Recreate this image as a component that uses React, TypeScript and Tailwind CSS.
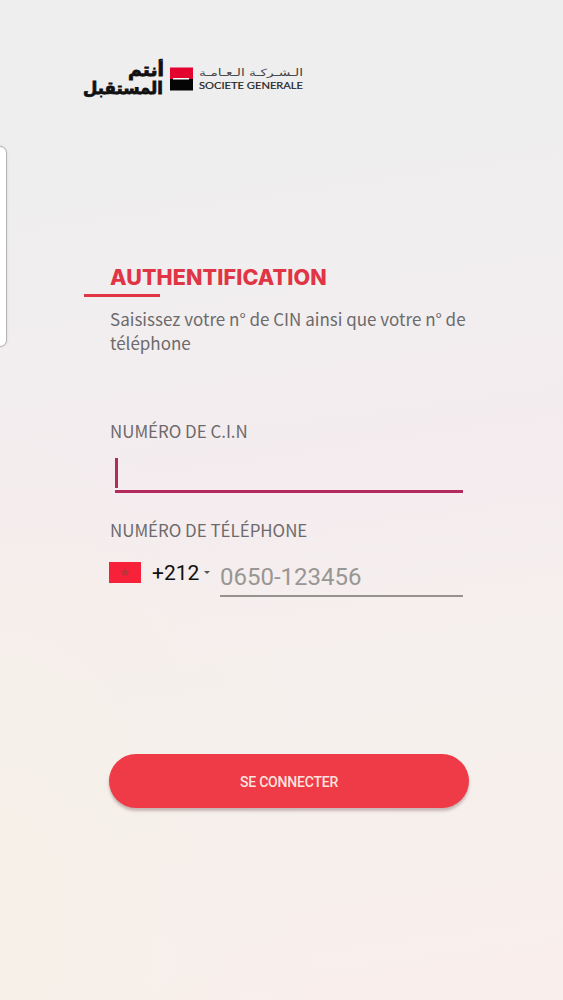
import { useState } from "react";

function BrandLogo() {
  return (
    <svg width="224" height="50" viewBox="0 0 224 50" role="img" aria-label="Société Générale">
      <g fill="#111111" fontWeight="700" fontFamily='"DejaVu Sans", sans-serif' direction="rtl">
        <text x="81" y="22.5" fontSize="17.5" textLength="36" lengthAdjust="spacingAndGlyphs" stroke="#111111" strokeWidth="0.8">
          أنتم
        </text>
        <text x="80" y="41" fontSize="17" textLength="80" lengthAdjust="spacingAndGlyphs" stroke="#111111" strokeWidth="0.8">
          المستقبل
        </text>
      </g>
      <rect x="87" y="14.5" width="23" height="11.5" fill="#e4032e" />
      <rect x="87" y="26" width="23" height="11.5" fill="#050505" />
      <rect x="90" y="25" width="16" height="1.5" fill="#ffffff" />
      <text
        x="220"
        y="23"
        direction="rtl"
        fill="#444444"
        fontSize="10"
        fontFamily='"DejaVu Sans", sans-serif'
        textLength="104"
        lengthAdjust="spacingAndGlyphs"
      >
        الـشـركـة الـعـامـة
      </text>
      <text
        x="116"
        y="35.5"
        fill="#222222"
        stroke="#222222"
        strokeWidth="0.2"
        fontSize="10.4"
        fontFamily='Lato, "Liberation Sans", sans-serif'
        textLength="104"
        lengthAdjust="spacingAndGlyphs"
      >
        SOCIETE GENERALE
      </text>
    </svg>
  );
}

function MoroccoFlag() {
  return (
    <svg width="32" height="21" viewBox="0 0 32 21" aria-hidden="true">
      <rect width="32" height="21" fill="#f8213a" />
      <path d="M16 7 18 13 12.8 9.3H19.2L14 13Z" fill="none" stroke="#b5363a" strokeWidth="1.2" />
    </svg>
  );
}

interface FieldLabelProps {
  htmlFor: string;
  children: string;
}

function FieldLabel({ htmlFor, children }: FieldLabelProps) {
  return (
    <label
      htmlFor={htmlFor}
      className="block h-6 whitespace-nowrap font-['Noto_Sans_CJK_SC',sans-serif] text-[16.9px] leading-6 text-[#6c6a6b]"
    >
      {children}
    </label>
  );
}

export default function App() {
  const [cin, setCin] = useState("");
  const [phone, setPhone] = useState("");

  return (
    <main className="relative h-[1000px] w-[563px] overflow-hidden bg-[radial-gradient(ellipse_at_0%_92%,#f6f0e8_0%,#f6f0e800_40%),linear-gradient(172deg,#eeeeee_0%,#efeeef_18%,#f2eeef_34%,#f4ecef_48%,#f5eeee_58%,#f5f0ed_70%,#f6efec_82%,#faeeed_100%)]">
      {/* Edge panel handle */}
      <div className="absolute top-[146px] -left-3 h-[201px] w-[19px] rounded-[7px] border border-[#b5b5b5] bg-white shadow-[0_0_2px_#c8c8c8]" />

      <header className="pt-[53px] pl-[83px]">
        <BrandLogo />
      </header>

      <section className="mt-40 ml-[110px]">
        <h1 className="h-7 whitespace-nowrap font-[Inter,sans-serif] text-[21.5px] leading-7 font-extrabold tracking-[0.1px] text-[#df3545]">
          AUTHENTIFICATION
        </h1>
        <div className="mt-[3px] -ml-[26px] h-[3px] w-[76px] bg-[#df3545]" />
        <p className="mt-2.5 w-[380px] font-['Noto_Sans_CJK_SC',sans-serif] text-[17px] leading-[23.5px] text-[#6c6a6b]">
          Saisissez votre n° de CIN ainsi que votre n° de
          <br />
          téléphone
        </p>
      </section>

      <form className="mt-[65px] ml-[110px]" onSubmit={(e) => e.preventDefault()}>
        <FieldLabel htmlFor="cin">NUMÉRO DE C.I.N</FieldLabel>
        <div className="mt-[15px] ml-[5px] flex h-[35px] w-[348px] border-b-3 border-[#b52a5c]">
          <div className="h-[30px] w-[3px] bg-[#b52a5c]" />
          <input
            id="cin"
            value={cin}
            onChange={(e) => setCin(e.target.value)}
            className="h-[30px] flex-1 bg-transparent outline-none"
          />
        </div>

        <div className="mt-[25px]">
          <FieldLabel htmlFor="phone">NUMÉRO DE TÉLÉPHONE</FieldLabel>
        </div>
        <div className="mt-3 flex h-[43px] w-[353px]">
          <div className="-ml-px flex h-9 w-[111px] items-center font-[Roboto,sans-serif]">
            <MoroccoFlag />
            <span className="ml-[11px] pt-0.5 text-[21px] leading-6 text-[#111111]">+212</span>
            <svg className="ml-[5px]" width="6" height="3" viewBox="0 0 6 3" aria-hidden="true">
              <path d="M0 0H6L3 3Z" fill="#555555" />
            </svg>
          </div>
          <input
            id="phone"
            value={phone}
            placeholder="0650-123456"
            onChange={(e) => setPhone(e.target.value)}
            className="h-[43px] w-[243px] border-b-2 border-[#969290] bg-transparent pt-1 font-[Roboto,sans-serif] text-2xl text-[#111111] outline-none placeholder:text-[#999694]"
          />
        </div>

        <button
          type="submit"
          className="mt-[157px] -ml-px flex h-[54px] w-[360px] items-center justify-center rounded-full bg-[#ef3a47] pt-0.5 font-[Roboto,sans-serif] text-sm font-medium tracking-[-0.2px] text-[#fde4df] shadow-[0_3px_3px_rgba(90,50,50,0.3)]"
        >
          SE CONNECTER
        </button>
      </form>
    </main>
  );
}
